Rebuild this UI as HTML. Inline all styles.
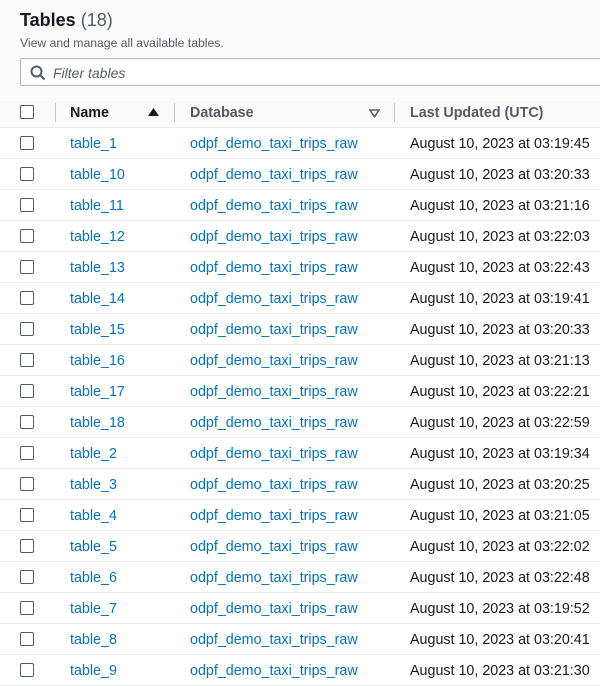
<!DOCTYPE html>
<html><head><style>
body{margin:0;width:600px;height:684px;overflow:hidden;background:#fff;font-family:"Liberation Sans",Arial,sans-serif;color:#16191f;position:relative}
.top{position:absolute;left:0;top:0;width:600px;height:96px;background:#fafafa}
h1{position:absolute;left:20px;top:10px;margin:0;font-size:18px;font-weight:bold;color:#16191f}
h1 span{font-weight:normal;color:#545b64}
.sub{position:absolute;left:20px;top:36px;font-size:12.2px;color:#545b64}
.search{position:absolute;left:20px;top:58px;width:600px;height:28px;border:1px solid #aab7b8;border-radius:2px;background:#fff;box-sizing:border-box}
.search span{position:absolute;left:32px;top:6px;font-style:italic;font-size:14px;color:#545b64}
.hdr{position:absolute;left:0;top:97px;width:600px;height:31px;background:#fafafa;border-bottom:1px solid #eaeded;box-sizing:border-box;font-weight:bold;font-size:14.3px;color:#545b64}
.row{position:absolute;left:0;width:600px;height:31px;border-bottom:1px solid #eaeded;box-sizing:border-box;font-size:14.3px}
.cb{position:absolute;left:20px;top:8px;width:14px;height:14px;border:1.5px solid #545b64;border-radius:2px;box-sizing:border-box;background:#fff}
.c1{position:absolute;left:70px;top:8px;color:#0073bb}
.c2{position:absolute;left:190px;top:8px;color:#0073bb}
.c3{position:absolute;left:410px;top:8px;color:#16191f}
.hdr .c1,.hdr .c2,.hdr .c3{top:8px}
.sep{position:absolute;top:6px;width:1px;height:19px;background:#c6c6cd}
</style></head><body>
<div class="top"></div>
<h1>Tables <span>(18)</span></h1>
<div class="sub">View and manage all available tables.</div>
<div class="search"><svg style="position:absolute;left:9px;top:6px" width="16" height="16" viewBox="0 0 16 16"><circle cx="6.5" cy="6.5" r="5" fill="none" stroke="#545b64" stroke-width="2"/><line x1="10" y1="10" x2="14.5" y2="14.5" stroke="#545b64" stroke-width="2"/></svg><span>Filter tables</span></div>
<div class="hdr">
<div class="cb"></div>
<div class="sep" style="left:55px"></div>
<div class="c1" style="color:#16191f">Name</div>
<svg style="position:absolute;left:148px;top:11px" width="11" height="9"><polygon points="0,8 11,8 5.5,0" fill="#16191f"/></svg>
<div class="sep" style="left:174px"></div>
<div class="c2" style="color:#545b64">Database</div>
<svg style="position:absolute;left:369px;top:12px" width="11" height="9"><polygon points="1,1 10,1 5.5,8" fill="none" stroke="#545b64" stroke-width="1.5"/></svg>
<div class="sep" style="left:394px"></div>
<div class="c3" style="color:#545b64">Last Updated (UTC)</div>
</div>
<div id="rows"></div>
<script>
var d=[["table_1","03:19:45"],["table_10","03:20:33"],["table_11","03:21:16"],["table_12","03:22:03"],["table_13","03:22:43"],["table_14","03:19:41"],["table_15","03:20:33"],["table_16","03:21:13"],["table_17","03:22:21"],["table_18","03:22:59"],["table_2","03:19:34"],["table_3","03:20:25"],["table_4","03:21:05"],["table_5","03:22:02"],["table_6","03:22:48"],["table_7","03:19:52"],["table_8","03:20:41"],["table_9","03:21:30"]];
var h="";d.forEach(function(r,i){h+='<div class="row" style="top:'+(128+i*31)+'px"><div class="cb"></div><div class="c1">'+r[0]+'</div><div class="c2">odpf_demo_taxi_trips_raw</div><div class="c3">August 10, 2023 at '+r[1]+'</div></div>';});
document.getElementById("rows").innerHTML=h;
</script>
</body></html>
